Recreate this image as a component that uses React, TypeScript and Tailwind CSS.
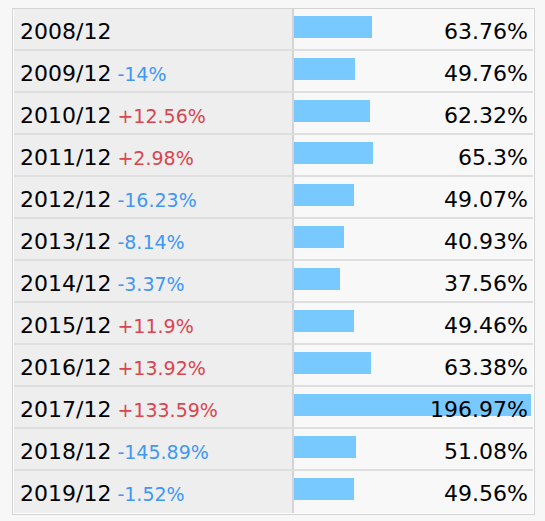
const rows = [
  { year: "2008/12", change: "", value: 63.76 },
  { year: "2009/12", change: "-14%", value: 49.76 },
  { year: "2010/12", change: "+12.56%", value: 62.32 },
  { year: "2011/12", change: "+2.98%", value: 65.3 },
  { year: "2012/12", change: "-16.23%", value: 49.07 },
  { year: "2013/12", change: "-8.14%", value: 40.93 },
  { year: "2014/12", change: "-3.37%", value: 37.56 },
  { year: "2015/12", change: "+11.9%", value: 49.46 },
  { year: "2016/12", change: "+13.92%", value: 63.38 },
  { year: "2017/12", change: "+133.59%", value: 196.97 },
  { year: "2018/12", change: "-145.89%", value: 51.08 },
  { year: "2019/12", change: "-1.52%", value: 49.56 },
];

export default function App() {
  return (
    <div className="min-h-[521px] bg-[#f7f7f7] pt-2 pl-3 font-['DejaVu_Sans',Verdana,sans-serif]">
      <div className="w-[523px] border border-[#d4d4d4] bg-white px-px pb-px">
        {rows.map((r) => (
          <div key={r.year} className="flex h-[42px] border-b-2 border-[#dedede] last:border-b-0">
            <div className="flex w-[278px] items-baseline gap-[6px] bg-[#eeeeee] pl-[6px] pt-[12px]">
              <span className="text-[22px] leading-[22px] text-black">{r.year}</span>
              {r.change && (
                <span
                  className={
                    r.change.startsWith("+")
                      ? "text-[19px] leading-[22px] text-[#d9464f]"
                      : "text-[19px] leading-[22px] text-[#3f98f5]"
                  }
                >
                  {r.change}
                </span>
              )}
            </div>
            <div className="relative flex flex-1 items-baseline justify-end border-l-2 border-[#d4d4d4] bg-[#f8f8f8] pr-[5px] pt-[12px]">
              <div
                className="absolute left-0 top-[7px] h-[22px] bg-[#77c9ff]"
                style={{ width: Math.min(r.value * 1.2 + 1, 239) }}
              />
              <span className="relative text-[22px] leading-[22px] text-black">{r.value}%</span>
            </div>
          </div>
        ))}
      </div>
    </div>
  );
}
